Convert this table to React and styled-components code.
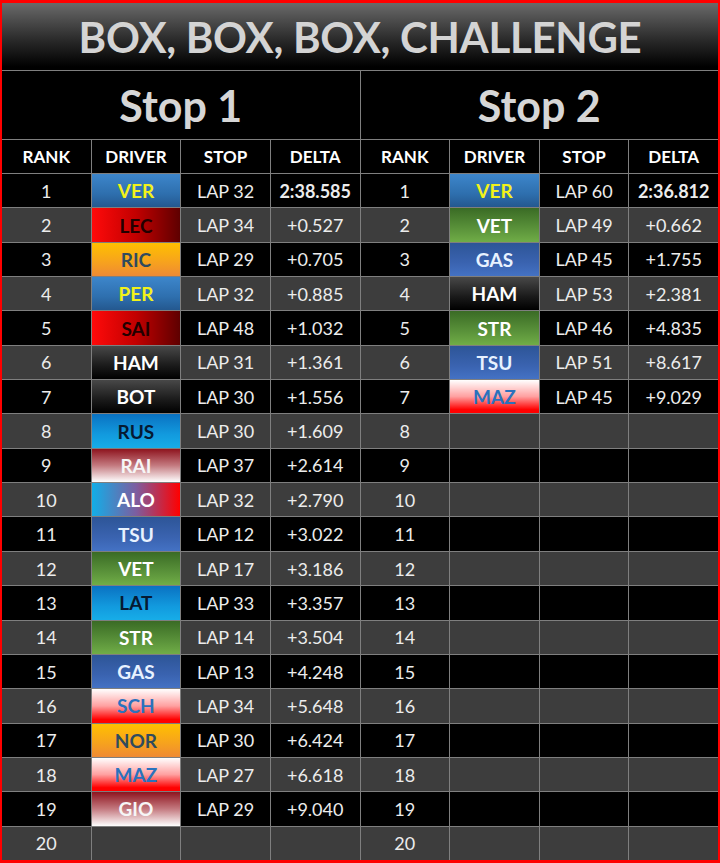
import React from 'react'
import styled, { createGlobalStyle } from 'styled-components'

const GlobalStyle = createGlobalStyle`
  html, body {
    margin: 0;
    padding: 0;
    background: #000;
  }
  body {
    font-family: Lato, "Open Sans", "Liberation Sans", sans-serif;
  }
`

const teams = {
  redbull: { bg: 'linear-gradient(to bottom, #3d86cb, #2e6fae 60%, #24588f)', color: '#f2f21a' },
  ferrari: { bg: 'linear-gradient(to right, #ff0a0a, #c20000 50%, #5e0000)', color: '#220000' },
  mclaren: { bg: 'linear-gradient(to bottom, #ffc000, #f7a41c 55%, #ef8a34)', color: '#2f4b5e' },
  mercedes: { bg: 'linear-gradient(to bottom, #484848, #1a1a1a 60%, #000)', color: '#ffffff' },
  williams: { bg: 'linear-gradient(to bottom, #0a72c2, #129ade 60%, #17ade8)', color: '#061a33' },
  alfa: { bg: 'linear-gradient(to bottom, #8e141e, #c47a80 50%, #ffffff)', color: '#f6f6f6' },
  alpine: { bg: 'linear-gradient(to right, #12aee8, #7c5ea0 50%, #ff0000)', color: '#ffffff' },
  alphatauri: { bg: 'linear-gradient(to bottom, #2d5597, #3a63b0 60%, #4472c4)', color: '#e8f2ff' },
  aston: { bg: 'linear-gradient(to bottom, #3a6b25, #5a923a 60%, #70ad47)', color: '#ffffff' },
  haas: { bg: 'linear-gradient(to bottom, #ffffff, #ffa0a0 50%, #ff0000 90%)', color: '#2a72bd' },
}

const driverTeam = {
  VER: 'redbull', PER: 'redbull',
  LEC: 'ferrari', SAI: 'ferrari',
  RIC: 'mclaren', NOR: 'mclaren',
  HAM: 'mercedes', BOT: 'mercedes',
  RUS: 'williams', LAT: 'williams',
  RAI: 'alfa', GIO: 'alfa',
  ALO: 'alpine',
  TSU: 'alphatauri', GAS: 'alphatauri',
  VET: 'aston', STR: 'aston',
  SCH: 'haas', MAZ: 'haas',
}

const stop1 = [
  ['VER', 'LAP 32', '2:38.585'],
  ['LEC', 'LAP 34', '+0.527'],
  ['RIC', 'LAP 29', '+0.705'],
  ['PER', 'LAP 32', '+0.885'],
  ['SAI', 'LAP 48', '+1.032'],
  ['HAM', 'LAP 31', '+1.361'],
  ['BOT', 'LAP 30', '+1.556'],
  ['RUS', 'LAP 30', '+1.609'],
  ['RAI', 'LAP 37', '+2.614'],
  ['ALO', 'LAP 32', '+2.790'],
  ['TSU', 'LAP 12', '+3.022'],
  ['VET', 'LAP 17', '+3.186'],
  ['LAT', 'LAP 33', '+3.357'],
  ['STR', 'LAP 14', '+3.504'],
  ['GAS', 'LAP 13', '+4.248'],
  ['SCH', 'LAP 34', '+5.648'],
  ['NOR', 'LAP 30', '+6.424'],
  ['MAZ', 'LAP 27', '+6.618'],
  ['GIO', 'LAP 29', '+9.040'],
]

const stop2 = [
  ['VER', 'LAP 60', '2:36.812'],
  ['VET', 'LAP 49', '+0.662'],
  ['GAS', 'LAP 45', '+1.755'],
  ['HAM', 'LAP 53', '+2.381'],
  ['STR', 'LAP 46', '+4.835'],
  ['TSU', 'LAP 51', '+8.617'],
  ['MAZ', 'LAP 45', '+9.029'],
]

const Page = styled.div`
  width: 720px;
  height: 863px;
  box-sizing: border-box;
  border: 2px solid #ff0000;
  border-top-width: 3px;
  border-bottom-width: 3px;
  display: flex;
  flex-direction: column;
  background: #7f7f7f;
  gap: 1px;
`

const Title = styled.h1`
  margin: 0;
  height: 67px;
  flex: none;
  display: flex;
  align-items: center;
  justify-content: center;
  background: linear-gradient(to bottom, #6a6a6a, #2a2a2a 55%, #000 95%);
  color: #d4d4d4;
  font-size: 42px;
  font-weight: 700;
  letter-spacing: -0.3px;
`

const Board = styled.div`
  flex: 1;
  display: flex;
  gap: 1px;
  min-height: 0;
`

const Half = styled.section`
  flex: 1;
  display: grid;
  grid-template-columns: repeat(4, 1fr);
  grid-template-rows: 68px 33px repeat(20, 1fr);
  gap: 1px;
  background: #7f7f7f;
`

const StopTitle = styled.div`
  grid-column: 1 / -1;
  display: flex;
  align-items: center;
  justify-content: center;
  background: #000;
  color: #d6d6d6;
  font-size: 43px;
  font-weight: 700;
`

const Head = styled.div`
  display: flex;
  align-items: center;
  justify-content: center;
  background: #000;
  color: #ffffff;
  font-size: 17px;
  font-weight: 700;
`

const Cell = styled.div`
  display: flex;
  align-items: center;
  justify-content: center;
  background: ${(p) => (p.$even ? '#3d3d3d' : '#000')};
  color: #ececec;
  font-size: 18px;
  font-weight: ${(p) => (p.$bold ? 700 : 400)};
`

const Driver = styled(Cell)`
  background: ${(p) => teams[p.$team].bg};
  color: ${(p) => teams[p.$team].color};
  font-size: 19px;
  font-weight: 700;
`

const StopTable = ({ title, rows }) => (
  <Half>
    <StopTitle>{title}</StopTitle>
    <Head>RANK</Head>
    <Head>DRIVER</Head>
    <Head>STOP</Head>
    <Head>DELTA</Head>
    {Array.from({ length: 20 }, (_, i) => {
      const row = rows[i]
      const even = i % 2 === 1
      return (
        <React.Fragment key={i}>
          <Cell $even={even}>{i + 1}</Cell>
          {row ? (
            <Driver $team={driverTeam[row[0]]}>{row[0]}</Driver>
          ) : (
            <Cell $even={even} />
          )}
          <Cell $even={even}>{row ? row[1] : ''}</Cell>
          <Cell $even={even} $bold={i === 0}>{row ? row[2] : ''}</Cell>
        </React.Fragment>
      )
    })}
  </Half>
)

const App = () => {
  return (
    <>
      <GlobalStyle />
      <Page>
        <Title>BOX, BOX, BOX, CHALLENGE</Title>
        <Board>
          <StopTable title="Stop 1" rows={stop1} />
          <StopTable title="Stop 2" rows={stop2} />
        </Board>
      </Page>
    </>
  )
}

export default App
